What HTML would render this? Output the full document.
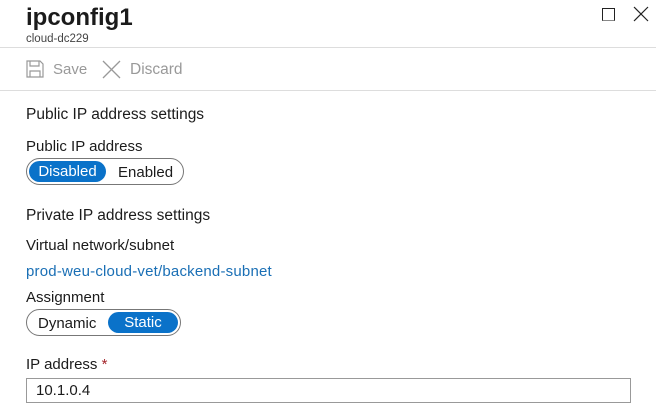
<!DOCTYPE html>
<html><head><style>
body{margin:0;width:656px;height:420px;background:#fff;font-family:"Segoe UI","Liberation Sans",sans-serif;color:#1b1b1b;position:relative;overflow:hidden}
.a{position:absolute;white-space:nowrap}
.t{font-size:15px}
.tog{position:absolute;border:1px solid #777;border-radius:14px;box-sizing:border-box}
.pill{position:absolute;background:#0a72c9;border-radius:11px;color:#fff;font-size:15px;text-align:center}
.opt{position:absolute;font-size:15px;line-height:21px}
</style></head><body>
<div class="a" style="left:26px;top:4px;font-size:24px;font-weight:bold;">ipconfig1</div>
<div class="a" style="left:26px;top:33px;font-size:11.5px;color:#444">cloud-dc229</div>
<div class="a" style="left:602px;top:8px;width:11px;height:11px;border:1px solid #222;border-bottom-color:#888"></div>
<svg class="a" style="left:633px;top:6px" width="16" height="16"><path d="M1 1L15 15M15 1L1 15" stroke="#222" stroke-width="1.2"/></svg>
<div class="a" style="left:0;top:47px;width:656px;height:1px;background:#ddd"></div>
<svg class="a" style="left:26px;top:60px" width="18" height="18" fill="none" stroke="#999" stroke-width="1.2"><path d="M1 1H14L17 4V17H1Z"/><path d="M4 1V6H13V1"/><path d="M4 17V11H14V17"/></svg>
<div class="a" style="left:53px;top:61px;font-size:15px;color:#999">Save</div>
<svg class="a" style="left:102px;top:60px" width="19" height="19"><path d="M1 1L18 18M18 1L1 18" stroke="#999" stroke-width="1.3"/></svg>
<div class="a" style="left:130px;top:61px;font-size:15.5px;color:#999">Discard</div>
<div class="a" style="left:0;top:90px;width:656px;height:1px;background:#ddd"></div>
<div class="a" style="left:26px;top:106px;font-size:15.5px">Public IP address settings</div>
<div class="a t" style="left:26px;top:138px">Public IP address</div>
<div class="tog" style="left:26px;top:158px;width:158px;height:27px"><div class="pill" style="left:2px;top:2px;width:77px;height:21px;line-height:22px">Disabled</div><div class="opt" style="left:91px;top:3px">Enabled</div></div>
<div class="a" style="left:26px;top:207px;font-size:15.5px">Private IP address settings</div>
<div class="a t" style="left:26px;top:237px">Virtual network/subnet</div>
<div class="a t" style="left:26px;top:263px;color:#1a6fb5;letter-spacing:0.2px">prod-weu-cloud-vet/backend-subnet</div>
<div class="a t" style="left:26px;top:289px">Assignment</div>
<div class="tog" style="left:26px;top:309px;width:155px;height:27px"><div class="opt" style="left:11px;top:3px">Dynamic</div><div class="pill" style="left:81px;top:2px;width:70px;height:21px;line-height:22px">Static</div></div>
<div class="a t" style="left:26px;top:356px">IP address <span style="color:#a4262c">*</span></div>
<div class="a" style="left:26px;top:378px;width:605px;height:25px;border:1px solid #999;box-sizing:border-box;font-size:15px;line-height:24px;padding-left:9px">10.1.0.4</div>
</body></html>
